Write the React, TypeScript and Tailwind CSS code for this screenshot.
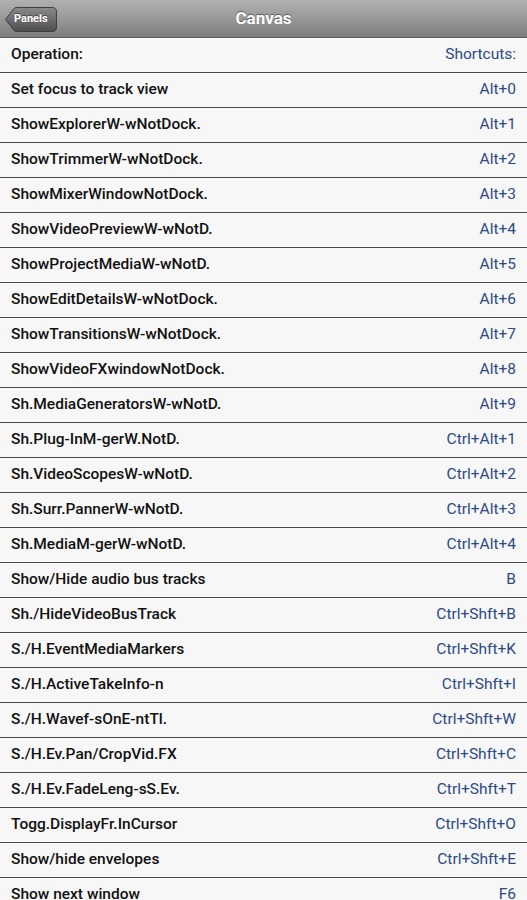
const rows: [string, string][] = [
  ['Operation:', 'Shortcuts:'],
  ['Set focus to track view', 'Alt+0'],
  ['ShowExplorerW-wNotDock.', 'Alt+1'],
  ['ShowTrimmerW-wNotDock.', 'Alt+2'],
  ['ShowMixerWindowNotDock.', 'Alt+3'],
  ['ShowVideoPreviewW-wNotD.', 'Alt+4'],
  ['ShowProjectMediaW-wNotD.', 'Alt+5'],
  ['ShowEditDetailsW-wNotDock.', 'Alt+6'],
  ['ShowTransitionsW-wNotDock.', 'Alt+7'],
  ['ShowVideoFXwindowNotDock.', 'Alt+8'],
  ['Sh.MediaGeneratorsW-wNotD.', 'Alt+9'],
  ['Sh.Plug-InM-gerW.NotD.', 'Ctrl+Alt+1'],
  ['Sh.VideoScopesW-wNotD.', 'Ctrl+Alt+2'],
  ['Sh.Surr.PannerW-wNotD.', 'Ctrl+Alt+3'],
  ['Sh.MediaM-gerW-wNotD.', 'Ctrl+Alt+4'],
  ['Show/Hide audio bus tracks', 'B'],
  ['Sh./HideVideoBusTrack', 'Ctrl+Shft+B'],
  ['S./H.EventMediaMarkers', 'Ctrl+Shft+K'],
  ['S./H.ActiveTakeInfo-n', 'Ctrl+Shft+I'],
  ['S./H.Wavef-sOnE-ntTl.', 'Ctrl+Shft+W'],
  ['S./H.Ev.Pan/CropVid.FX', 'Ctrl+Shft+C'],
  ['S./H.Ev.FadeLeng-sS.Ev.', 'Ctrl+Shft+T'],
  ['Togg.DisplayFr.InCursor', 'Ctrl+Shft+O'],
  ['Show/hide envelopes', 'Ctrl+Shft+E'],
  ['Show next window', 'F6'],
];

export default function App() {
  return (
    <div className="w-[527px] h-[900px] overflow-hidden bg-[#f7f7f7] font-['Roboto',sans-serif]">
      <div className="relative h-[38px] flex items-center justify-center border-b border-[#5e5e5e] bg-gradient-to-b from-[#b0b0b0] via-[#999999] to-[#7c7c7c]">
        <div className="absolute left-[5px] top-[7px] flex items-center">
          <svg width="52" height="25" viewBox="0 0 52 25">
            <defs>
              <linearGradient id="bk" x1="0" y1="0" x2="0" y2="1">
                <stop offset="0" stopColor="#8a8a8a" />
                <stop offset="1" stopColor="#4e4e4e" />
              </linearGradient>
            </defs>
            <path
              d="M0.5 12.5 L9 1.5 Q10 0.5 11.5 0.5 L47 0.5 Q51.5 0.5 51.5 5 L51.5 20 Q51.5 24.5 47 24.5 L11.5 24.5 Q10 24.5 9 23.5 Z"
              fill="url(#bk)"
              stroke="#3f3f3f"
            />
          </svg>
          <span className="absolute left-[9px] top-[4px] text-[11px] font-bold text-white [text-shadow:0_-1px_0_rgba(0,0,0,0.4)]">
            Panels
          </span>
        </div>
        <span className="text-[17px] font-bold text-white [text-shadow:0_-1px_1px_rgba(0,0,0,0.45)]">Canvas</span>
      </div>
      {rows.map(([op, key]) => (
        <div
          key={op}
          className="h-[35px] flex items-center justify-between px-[11px] border-b border-[#4a4a4a]"
        >
          <span className="text-[15.5px] font-medium text-[#111]">{op}</span>
          <span className="text-[15.5px] text-[#2c4a86]">{key}</span>
        </div>
      ))}
    </div>
  );
}
